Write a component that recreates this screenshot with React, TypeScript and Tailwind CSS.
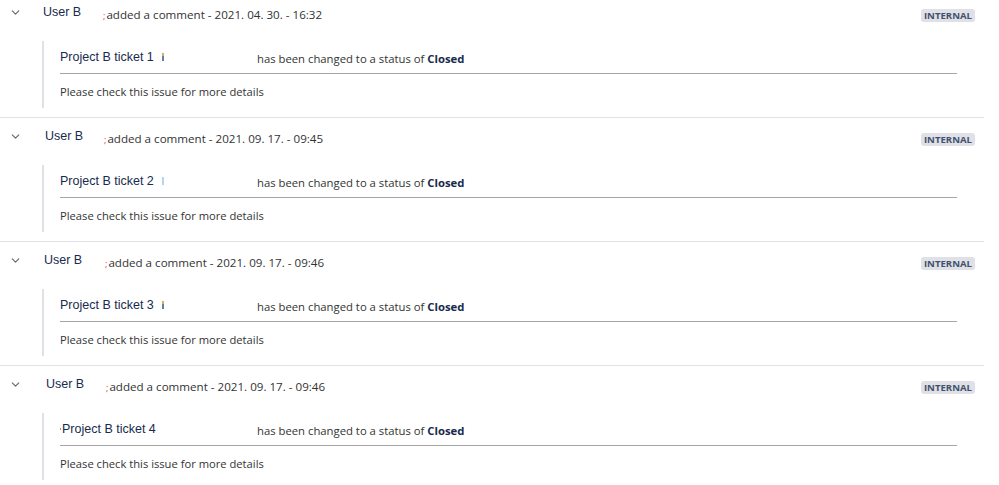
import { ChevronDown } from "lucide-react";

type Entry = {
  date: string;
  ticket: string;
  userX: number;
  markX: number;
  tick: "amber" | "blue" | "dot" | "amber2";
};

const entries: Entry[] = [
  { date: "2021. 04. 30. - 16:32", ticket: "Project B ticket 1", userX: 0, markX: 0, tick: "amber" },
  { date: "2021. 09. 17. - 09:45", ticket: "Project B ticket 2", userX: 2, markX: 1, tick: "blue" },
  { date: "2021. 09. 17. - 09:46", ticket: "Project B ticket 3", userX: 1, markX: 2, tick: "amber2" },
  { date: "2021. 09. 17. - 09:46", ticket: "Project B ticket 4", userX: 3, markX: 3, tick: "dot" },
];

const arial = { fontFamily: '"Liberation Sans", Arial, sans-serif' };
const ui = { fontFamily: '"Open Sans", "Noto Sans", sans-serif' };

// small leftover marks next to the ticket title
function Tick({ kind }: { kind: Entry["tick"] }) {
  if (kind === "blue") return <span className="ml-[8px] inline-block h-[8px] w-[2px] bg-[#b3d4f5]" />;
  if (kind === "amber" || kind === "amber2")
    return (
      <span className="ml-[8px] inline-flex h-[8px] w-[2px] flex-col">
        <span className="h-[3px] bg-[#c9b36a]" />
        <span className="h-[5px] bg-[#6b7f9a]" />
      </span>
    );
  return null;
}

function Comment({ e, first }: { e: Entry; first: boolean }) {
  return (
    <div className={`border-b border-[#dfe1e6] pb-[9px] ${first ? "pt-[4px]" : "pt-[10px]"}`}>
      {/* header row */}
      <div className="flex h-[16px] items-center">
        <div className="flex w-[29px] justify-center pl-[1px]">
          <ChevronDown size={13} strokeWidth={2.2} className="text-[#6b6b6b]" />
        </div>
        <span className="text-[12.5px] text-[#172b4d]" style={{ ...arial, marginLeft: 14 + e.userX }}>
          User B
        </span>
      </div>
      <div className="-mt-[16px] flex h-[16px] items-center">
        <span
          className="translate-y-[3px] text-[9px] leading-none text-[#e0324a]"
          style={{ ...ui, marginLeft: 103 + e.markX }}
        >
          ;
        </span>
        <span className="ml-[1px] translate-y-[3px] text-[11.6px] text-[#333]" style={ui}>
          added a comment - {e.date}
        </span>
        <span
          className="ml-auto mr-[9px] translate-y-[3px] rounded-[3px] bg-[#dfe1e6] px-[3px] text-[9.6px] font-bold leading-[13px] text-[#42526e]"
          style={ui}
        >
          INTERNAL
        </span>
      </div>

      {/* quoted body */}
      <div className="ml-[42px] mt-[21px] h-[67px] border-l-2 border-[#dfe1e6] pl-[16px] pt-[8px]">
        <div className="flex h-[16px] items-center">
          <div className="flex w-[197px] items-center">
            {e.tick === "dot" && <span className="mr-[1px] h-[2px] w-[1px] bg-[#999]" />}
            <span className="text-[12.5px] text-[#172b4d]" style={arial}>
              {e.ticket}
            </span>
            <Tick kind={e.tick} />
          </div>
          <span className="translate-y-[2px] text-[11.3px] text-[#333]" style={ui}>
            has been changed to a status of <b className="font-bold text-[#172b4d]">Closed</b>
          </span>
        </div>
        <div className="mt-[8px] w-[897px] border-b border-[#a5a5a5]" />
        <div className="mt-[9px] text-[11.2px] leading-[18px] text-[#333]" style={ui}>
          Please check this issue for more details
        </div>
      </div>
    </div>
  );
}

export default function App() {
  return (
    <div className="h-[485px] w-[999px] overflow-hidden bg-white">
      <div className="w-[984px]">
        {entries.map((e, i) => (
          <Comment key={i} e={e} first={i === 0} />
        ))}
      </div>
    </div>
  );
}
